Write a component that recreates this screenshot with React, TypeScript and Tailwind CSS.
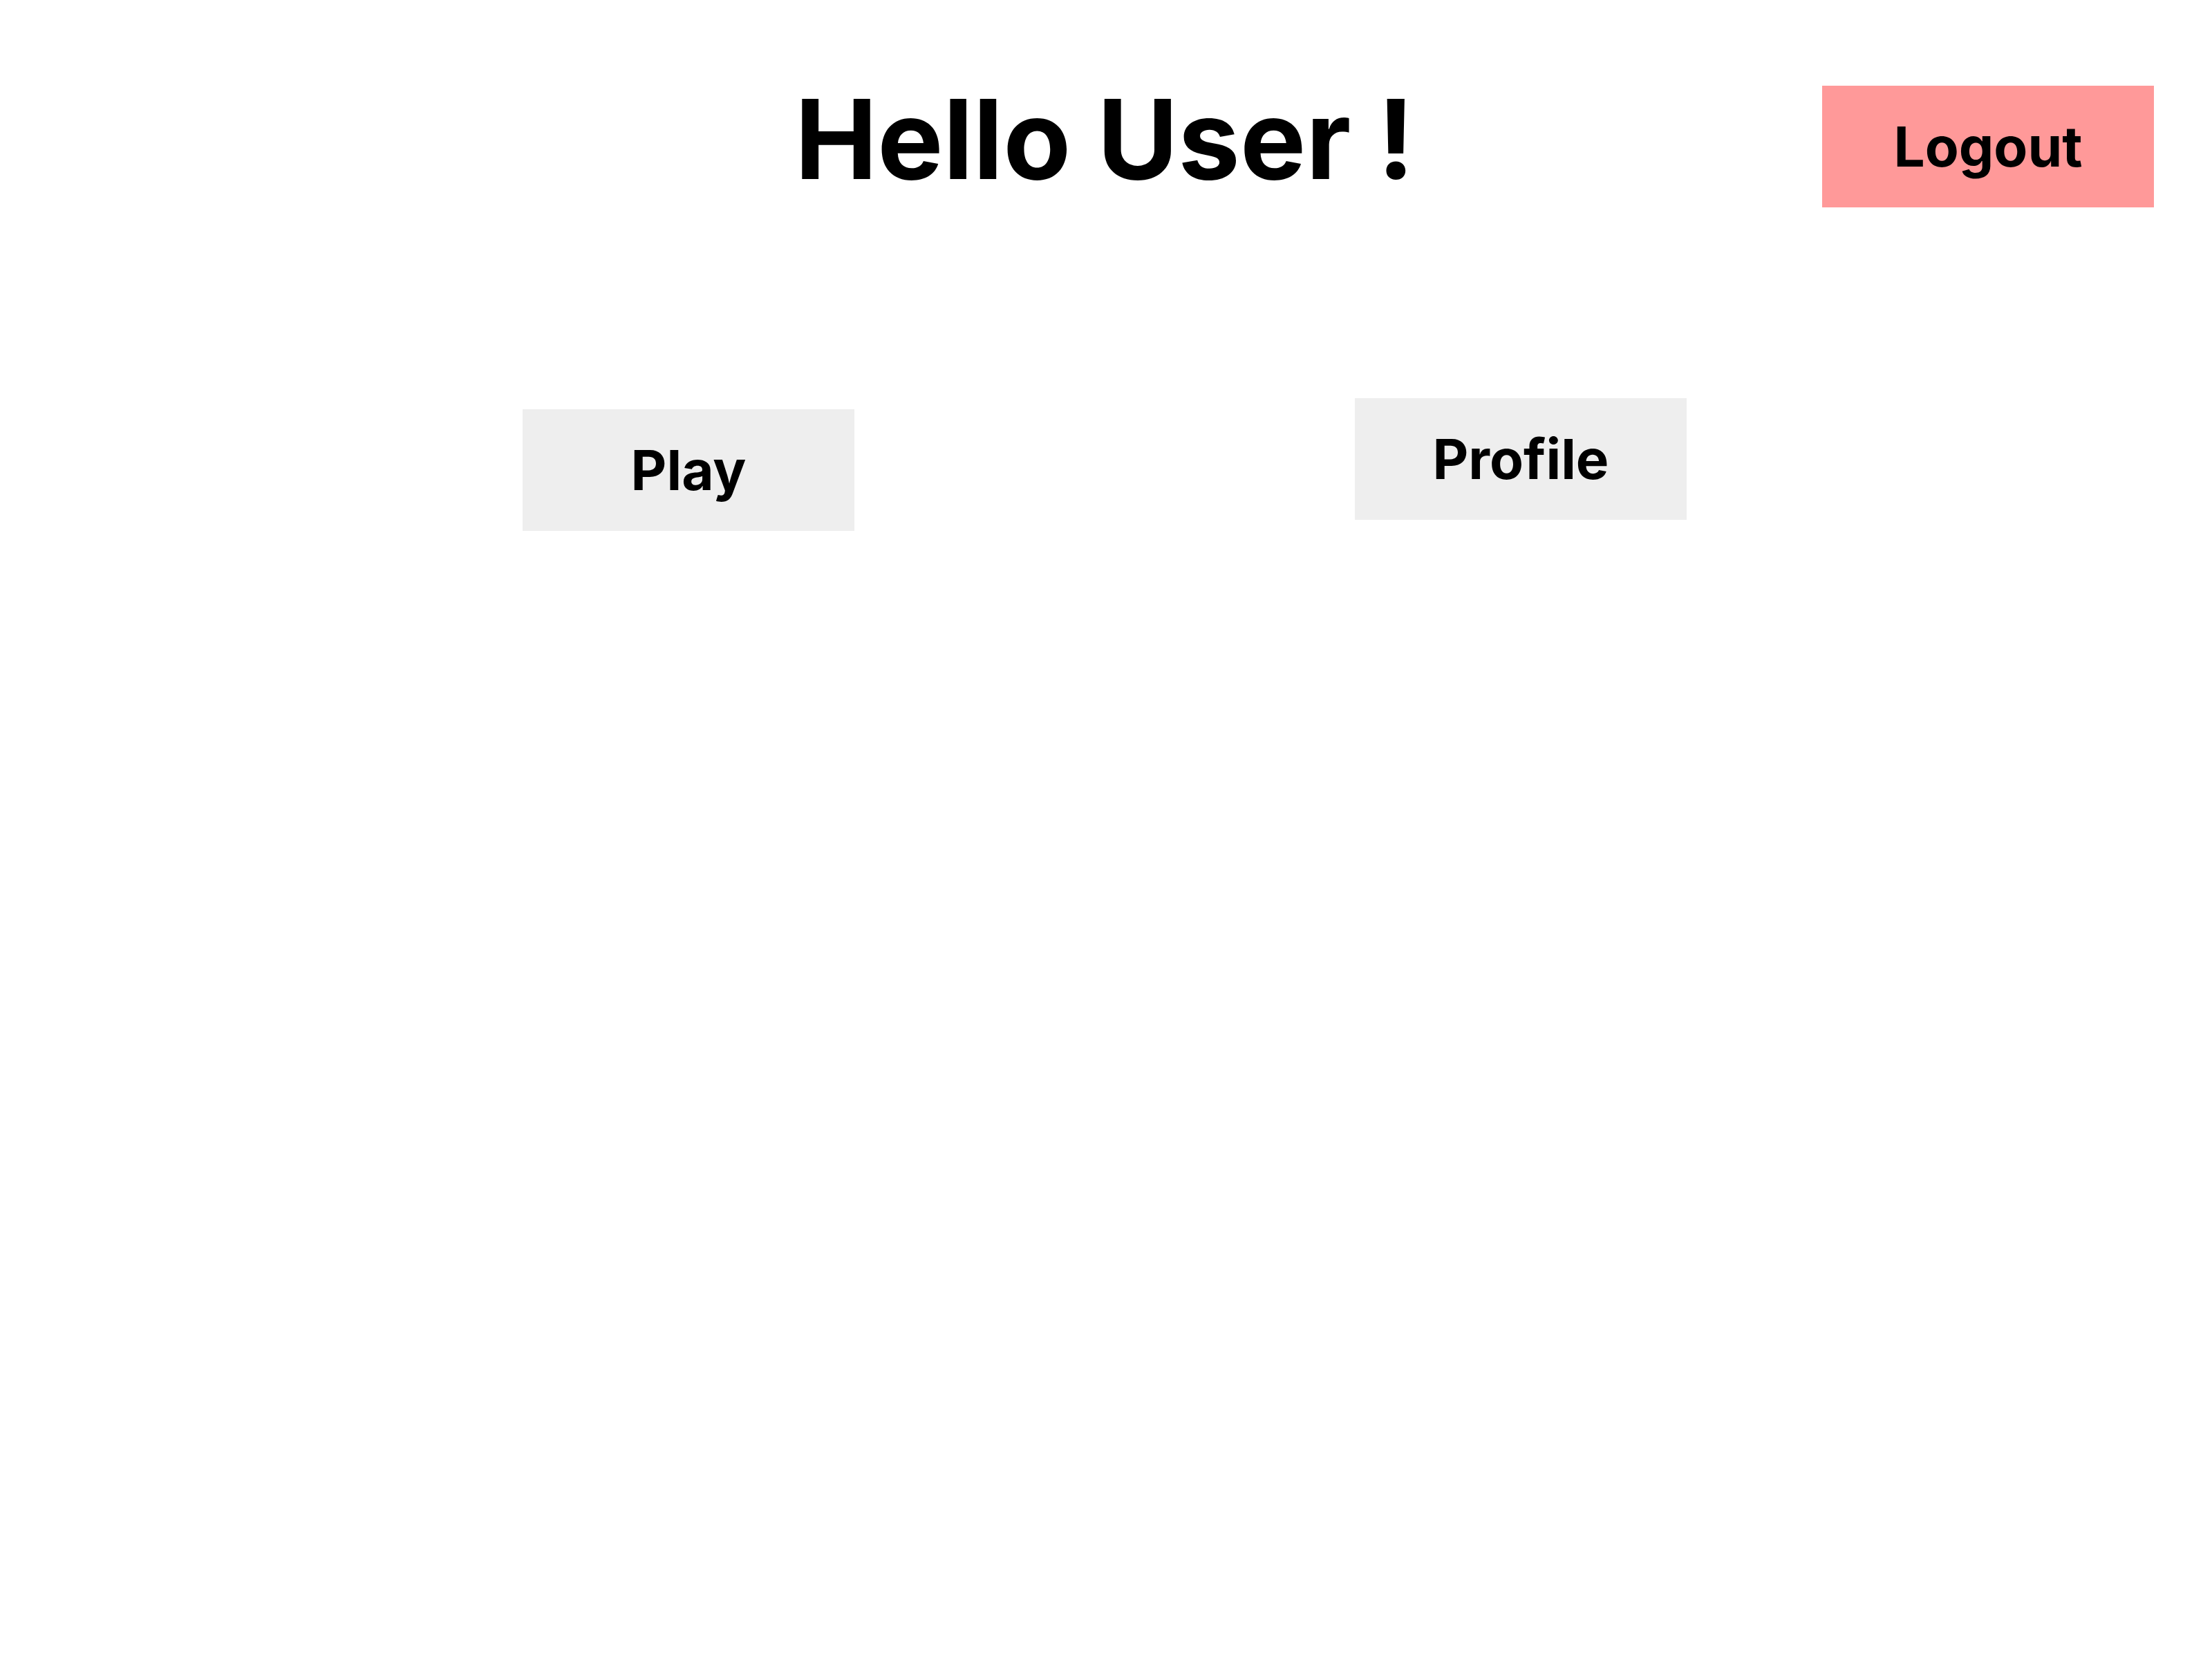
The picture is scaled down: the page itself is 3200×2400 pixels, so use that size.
import React from "react";

const App: React.FC = () => {
  return (
    <div className="min-h-screen bg-white text-black font-['Inter',sans-serif]">
      {/* Header */}
      <header className="grid grid-cols-[1fr_auto_1fr] items-start pt-[104px]">
        <div />
        <h1 className="text-[160px] font-bold leading-[194px] pr-[4px]">Hello User !</h1>
        <div className="flex justify-end pr-[84px]">
          <button className="mt-[20px] w-[480px] h-[176px] bg-[#ff9999] flex items-center justify-center text-[80px] font-bold">
            Logout
          </button>
        </div>
      </header>

      {/* Menu */}
      <div className="flex justify-center items-start gap-[724px] mt-[276px] pr-[4px]">
        <button className="mt-[16px] w-[480px] h-[176px] bg-[#eeeeee] flex items-center justify-center text-[80px] font-bold">
          Play
        </button>
        <button className="w-[480px] h-[176px] bg-[#eeeeee] flex items-center justify-center text-[80px] font-bold">
          Profile
        </button>
      </div>
    </div>
  );
};

export default App;
